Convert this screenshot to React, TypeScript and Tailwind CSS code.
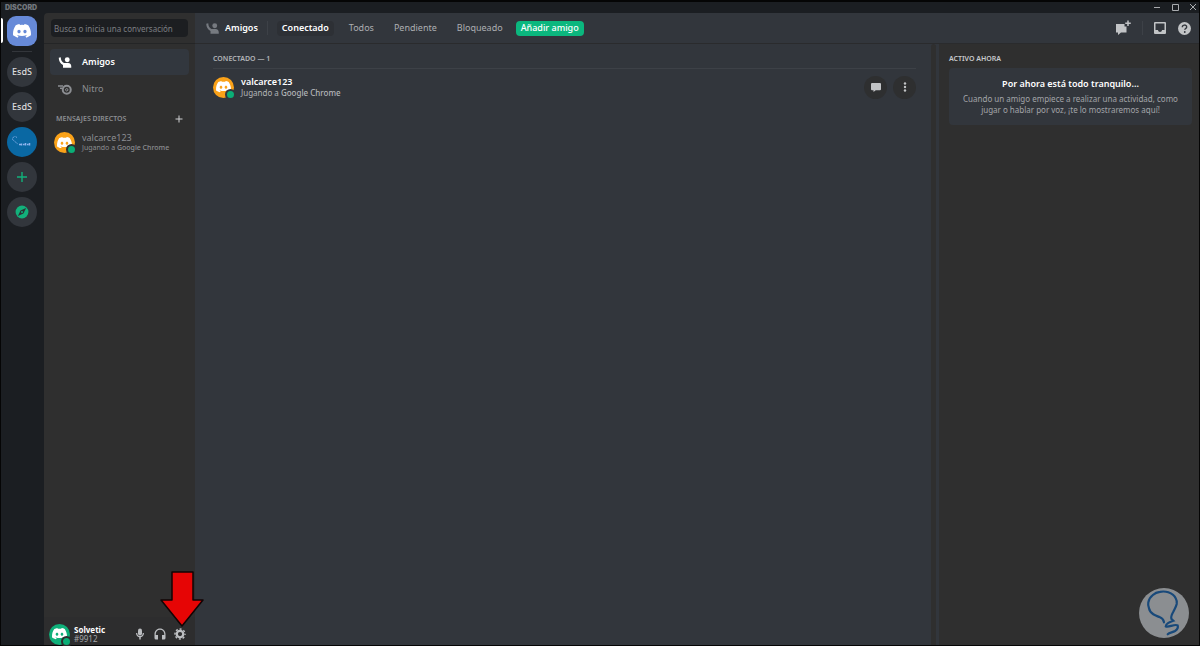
import type { ReactNode } from "react";
import clsx from "clsx";

const CLYDE =
  "M107.7,8.07A105.15,105.15,0,0,0,81.47,0a72.06,72.06,0,0,0-3.36,6.83A97.68,97.68,0,0,0,49,6.83,72.37,72.37,0,0,0,45.64,0,105.89,105.89,0,0,0,19.39,8.09C2.79,32.65-1.71,56.6.54,80.21h0A105.73,105.73,0,0,0,32.71,96.36,77.7,77.7,0,0,0,39.6,85.25a68.42,68.42,0,0,1-10.85-5.18c.91-.66,1.8-1.34,2.66-2a75.57,75.57,0,0,0,64.32,0c.87.71,1.76,1.39,2.66,2a68.68,68.68,0,0,1-10.87,5.19,77,77,0,0,0,6.89,11.1A105.25,105.25,0,0,0,126.6,80.22h0C129.24,52.84,122.09,29.11,107.7,8.07ZM42.45,65.69C36.18,65.69,31,60,31,53s5-12.74,11.43-12.74S54,46,53.89,53,48.84,65.69,42.45,65.69Zm42.24,0C78.41,65.69,73.25,60,73.25,53s5-12.74,11.44-12.74S96.23,46,96.12,53,91.08,65.69,84.69,65.69Z";

const Clyde = ({ className }: { className: string }) => (
  <svg viewBox="0 0 127.14 96.36" fill="currentColor" className={className}>
    <path d={CLYDE} />
  </svg>
);

const FriendsIcon = ({ className }: { className: string }) => (
  <svg viewBox="0 0 26 22" fill="currentColor" className={className}>
    <circle cx="17.500" cy="5.400" r="4.900" />
    <path d="M.5 1.500 4.500.5C4.800 6 6.500 10 11 12H19C23.500 12 25.500 15 25.500 18.500V21.500H9V16C3.500 13 .5 8 .5 1.500Z" />
  </svg>
);

const NitroIcon = () => (
  <svg viewBox="0 0 28 22" fill="none" stroke="currentColor" className="h-[11px] w-[14px]">
    <path d="M0 4h10M4 8.500h4" strokeWidth="2.800" />
    <circle cx="17.500" cy="11.500" r="8" strokeWidth="4" />
    <path d="m17.500 9 2.200 1.300v2.500l-2.200 1.300-2.200-1.300v-2.500z" strokeWidth="2" />
  </svg>
);

const ChatIcon = ({ className }: { className: string }) => (
  <svg viewBox="0 0 20 18" fill="currentColor" className={className}>
    <path d="M2 0h16a2 2 0 0 1 2 2v10.500a2 2 0 0 1-2 2H9.500L5 18v-3.500H2a2 2 0 0 1-2-2V2a2 2 0 0 1 2-2Z" />
  </svg>
);

const Avatar = ({ color, ring }: { color: string; ring: string }) => (
  <span className={clsx("relative flex size-[21px] shrink-0 items-center justify-center rounded-full text-white", color)}>
    <Clyde className="w-[15px]" />
    <span className={clsx("absolute -right-0.5 -bottom-0.5 size-[11px] rounded-full border-2 bg-[#0aae76]", ring)} />
  </span>
);

const RailButton = ({ label, className, children }: { label: string; className?: string; children: ReactNode }) => (
  <button
    aria-label={label}
    className={clsx("flex size-[30px] shrink-0 items-center justify-center rounded-full", className ?? "bg-[#32363c]")}
  >
    {children}
  </button>
);

const TitleBar = () => (
  <div className="flex h-[13px] shrink-0 items-center justify-between border-t-2 border-[#050505] bg-[#1b1e22] pl-1 text-[#73777d]">
    <span className="font-['Inter'] text-[7px] leading-3 font-black">DISCORD</span>
    <div className="flex gap-2 pr-px text-[#a9abae]">
      <button aria-label="Minimizar">
        <svg viewBox="0 0 10 10" className="size-[10px]" stroke="currentColor"><path d="M2 4.500h6" /></svg>
      </button>
      <button aria-label="Maximizar">
        <svg viewBox="0 0 10 10" className="size-[10px]" stroke="currentColor" fill="none"><path d="M2.500 1.500h6v6h-6z" /></svg>
      </button>
      <button aria-label="Cerrar">
        <svg viewBox="0 0 10 10" className="size-[10px]" stroke="currentColor"><path d="m2 1 6 6M8 1 2 7" /></svg>
      </button>
    </div>
  </div>
);

const ServerRail = () => (
  <nav className="flex w-[43px] shrink-0 flex-col gap-[5px] bg-[#1b1e22] pt-[3px] pl-[6px]">
    <div className="relative">
      <span className="absolute top-[2px] -left-[6px] h-[25px] w-[2px] rounded-r bg-white" />
      <button aria-label="Inicio" className="flex size-[30px] items-center justify-center rounded-[9px] bg-[#678ad8] text-white">
        <Clyde className="w-[18px]" />
      </button>
    </div>
    <div className="ml-[5px] h-px w-5 bg-[#33363b]" />
    {[1, 2].map((n) => (
      <RailButton key={n} label={`Servidor ${n}`}>
        <span className="text-[9px] font-medium text-[#dcddde]">EsdS</span>
      </RailButton>
    ))}
    <RailButton label="Solvetic" className="bg-[#0a68a3]">
      <svg viewBox="0 0 20 12" className="h-3 w-5" fill="none" stroke="#8fb4ee">
        <path d="M5 1.500 2.500 0 0 3l4 3.500 2 1.500" strokeDasharray="1.500 .6" strokeWidth=".8" />
        <path d="M7 8.500h2M9.500 7.500v2M11 8.500h1.500M13.500 7v2.500M15 8.500h1.500M17.500 7v2.500" strokeWidth="1.500" />
      </svg>
    </RailButton>
    <RailButton label="Añadir un servidor">
      <svg viewBox="0 0 12 12" className="size-3" stroke="#12b17b" strokeWidth="1.400"><path d="M6 1v10M1 6h10" /></svg>
    </RailButton>
    <RailButton label="Explorar servidores">
      <svg viewBox="0 0 24 24" className="size-[14px]">
        <circle cx="12" cy="12" r="11" fill="#12b17b" />
        <path d="m19 5-4.500 9.500L5 19l4.500-9.500Z" fill="#2b3235" />
        <circle cx="12" cy="12" r="1.700" fill="#12b17b" />
      </svg>
    </RailButton>
  </nav>
);

const UserPanel = () => (
  <div className="relative flex h-7 items-center bg-[#2d2d2e] pt-[6px] pr-[9px] pl-[5px]">
    <Avatar color="bg-[#0fb07a]" ring="border-[#2d2d2e]" />
    <div className="ml-1 flex-1 text-[8px] leading-[9px]">
      <div className="font-bold text-white">Solvetic</div>
      <div className="text-[#a5a7aa]">#9912</div>
    </div>
    <div className="flex gap-2 text-[#bcbec1]">
      <button aria-label="Silenciar">
        <svg viewBox="0 0 24 24" className="size-3" fill="currentColor">
          <rect x="8" y="1" width="8" height="14" rx="4" />
          <path d="M4 10h2.500c0 4 2 6 5.500 6s5.500-2 5.500-6H20c0 4.500-2.500 7.500-6.500 8.300V23h-3v-4.700C6.500 17.500 4 14.500 4 10Z" />
        </svg>
      </button>
      <button aria-label="Ensordecer">
        <svg viewBox="0 0 24 24" className="size-3" fill="currentColor">
          <path d="M12 1C5.500 1 1 6 1 12v8a3 3 0 0 0 3 3h4v-9H3.500v-2C3.500 7.500 7 3.500 12 3.500s8.500 4 8.500 8.500v2H16v9h4a3 3 0 0 0 3-3v-8c0-6-4.500-11-11-11Z" />
        </svg>
      </button>
      <button aria-label="Ajustes de usuario">
        <svg viewBox="0 0 24 24" className="size-3" fill="none" stroke="currentColor">
          <circle cx="12" cy="12" r="6.500" strokeWidth="4.500" />
          <circle cx="12" cy="12" r="10" strokeWidth="3" strokeDasharray="4 3.854" strokeDashoffset="2" />
        </svg>
      </button>
    </div>
    <svg viewBox="0 0 44 58" className="absolute right-[-9px] bottom-[17px] h-[58px] w-[44px]">
      <path d="M12 2H33V30H43L22 56 1 30H12Z" fill="#e60505" stroke="#120404" strokeWidth="1.500" strokeLinejoin="round" />
    </svg>
  </div>
);

const Sidebar = () => (
  <aside className="flex w-[151px] shrink-0 flex-col rounded-tl bg-[#2f2f2f]">
    <div className="flex h-[31px] shrink-0 items-center border-b border-[#242526] px-[7px]">
      <input
        aria-label="Busca o inicia una conversación"
        placeholder="Busca o inicia una conversación"
        className="h-[18px] w-full rounded-sm bg-[#1c1e21] px-[3px] text-[8px] outline-none placeholder:text-[#7d7f83]"
      />
    </div>
    <div className="flex flex-1 flex-col px-[6px] pt-[5px]">
      <button className="flex h-[26px] items-center gap-[10px] rounded-sm bg-[#32373e] pl-2 text-[9px] font-semibold text-white">
        <FriendsIcon className="h-[11px] w-[14px]" />
        Amigos
      </button>
      <button className="mt-px flex h-[26px] items-center gap-[10px] pl-2 text-[9px] text-[#8c8e92]">
        <NitroIcon />
        Nitro
      </button>
      <div className="mt-2 flex h-[18px] items-center justify-between px-[6px] text-[#8c8e92]">
        <h2 className="text-[7px] font-semibold">MENSAJES DIRECTOS</h2>
        <button aria-label="Crear MD">
          <svg viewBox="0 0 8 8" className="size-2" stroke="#d0d1d3"><path d="M4 .5v7M.5 4h7" /></svg>
        </button>
      </div>
      <a href="#dm" className="flex h-[29px] items-center gap-[7px] pl-1">
        <Avatar color="bg-[#faa219]" ring="border-[#2f2f2f]" />
        <div className="text-[#8c8e92]">
          <div className="text-[9px] leading-[10px]">valcarce123</div>
          <div className="text-[7px] leading-[10px]">
            Jugando a <span className="font-medium">Google Chrome</span>
          </div>
        </div>
      </a>
    </div>
    <UserPanel />
  </aside>
);

const tabs = ["Todos", "Pendiente", "Bloqueado"];

const Header = () => (
  <header className="flex h-[31px] shrink-0 items-center border-b border-[#2a2b2d] bg-[#32363c] pr-2 pl-[11px] text-[9px]">
    <FriendsIcon className="h-[11px] w-[13px] text-[#767a80]" />
    <h1 className="ml-[6px] font-semibold text-white">Amigos</h1>
    <div className="mx-[9px] h-[14px] w-px bg-[#3d4147]" />
    <button className="h-[15px] rounded-sm bg-[#2d3035] px-[5px] font-semibold text-white">Conectado</button>
    <div className="ml-[15px] flex gap-5 text-[#adafb2]">
      {tabs.map((tab) => (
        <button key={tab}>{tab}</button>
      ))}
    </div>
    <button className="ml-[13px] h-[15px] rounded-sm bg-[#0bb77e] px-[5px] font-medium text-white">Añadir amigo</button>
    <div className="ml-auto flex items-center text-[#c2c4c6]">
      <button aria-label="Nuevo grupo" className="flex">
        <svg viewBox="0 0 32 32" className="size-4" fill="currentColor">
          <path d="M2 8h17v5h4v12H12l-6 5v-5H2Z" />
          <path d="M24.500 1h3v4h4v3h-4v4h-3V8h-4V5h4Z" />
        </svg>
      </button>
      <div className="mx-[11px] h-[14px] w-px bg-[#3d4147]" />
      <button aria-label="Bandeja de entrada" className="flex">
        <svg viewBox="0 0 24 24" className="size-[12px]" fill="currentColor" fillRule="evenodd">
          <path d="M2 0h20a2 2 0 0 1 2 2v20a2 2 0 0 1-2 2H2a2 2 0 0 1-2-2V2a2 2 0 0 1 2-2Zm1 3v13h5c0 2 2 4 4 4s4-2 4-4h5V3Z" />
        </svg>
      </button>
      <button aria-label="Ayuda" className="ml-3 flex">
        <svg viewBox="0 0 24 24" className="size-[13px]">
          <circle cx="12" cy="12" r="12" fill="currentColor" />
          <path d="M8 9.500c0-5 8-5 8-.5 0 3-3.500 3-3.500 5.500" fill="none" stroke="#32363c" strokeWidth="2.600" />
          <circle cx="12.500" cy="18.500" r="1.700" fill="#32363c" />
        </svg>
      </button>
    </div>
  </header>
);

const FriendList = () => (
  <main className="min-w-0 flex-1 bg-[#32363c] pr-[14px] pl-[18px]">
    <h2 className="border-b border-[#3d4147] pt-[9px] pb-[3px] text-[7px] leading-3 font-semibold text-[#b3b5b8]">
      CONECTADO — 1
    </h2>
    <div className="flex h-9 items-center">
      <Avatar color="bg-[#faa219]" ring="border-[#32363c]" />
      <div className="ml-[7px]">
        <div className="text-[9px] leading-[11px] font-semibold text-white">valcarce123</div>
        <div className="text-[8px] leading-[11px] text-[#b3b5b8]">
          Jugando a <span className="font-medium">Google Chrome</span>
        </div>
      </div>
      <div className="ml-auto flex gap-[6px] text-[#c2c4c6]">
        <button aria-label="Mensaje" className="flex size-[23px] items-center justify-center rounded-full bg-[#2e2f30]">
          <ChatIcon className="h-[9px] w-[10px]" />
        </button>
        <button aria-label="Más" className="flex size-[23px] items-center justify-center rounded-full bg-[#2e2f30]">
          <svg viewBox="0 0 4 12" className="h-3 w-1" fill="currentColor">
            <circle cx="2" cy="2.500" r="1.200" />
            <circle cx="2" cy="6" r="1.200" />
            <circle cx="2" cy="9.500" r="1.200" />
          </svg>
        </button>
      </div>
    </div>
  </main>
);

const ActiveNow = () => (
  <aside className="relative w-[260px] shrink-0 bg-[#2f2f2f] pt-[9px] pr-[7px] pl-[10px]">
    <h2 className="text-[7px] leading-3 font-semibold text-[#c8cacc]">ACTIVO AHORA</h2>
    <div className="mt-[3px] rounded-sm bg-[#32363c] px-2 pt-[10px] pb-[10px] text-center">
      <div className="text-[9px] leading-3 font-semibold text-white">Por ahora está todo tranquilo...</div>
      <p className="mt-[3px] text-[8px] leading-[11px] text-[#a3a5a9]">
        Cuando un amigo empiece a realizar una actividad, como jugar o hablar por voz, ¡te lo mostraremos aquí!
      </p>
    </div>
    <svg viewBox="0 0 50 50" className="absolute right-[10px] bottom-[7px] size-[50px]" fill="none">
      <circle cx="25" cy="25" r="25" fill="#8b8e91" />
      <path
        d="M25 34.300C24.500 31.500 23 30 21 29.300C19 28.300 17 28 14.300 26.300C11.500 24.500 10.300 22 10 20.300C9 18 9 16 9.300 14.500C10 11 11 9 13.500 7.300C16 5 18.500 4 21 3.800C24 3.300 27 3.500 29.300 4.300C33 5.500 35.500 7.500 36.700 10.300C38 12.500 38 14 37.700 16C37 19 35.500 21 34.300 23.700C33 26 31.500 29 32.500 31L34.300 32.700C31.500 33.500 26.500 36 26.700 38.300C29 40 36 35.500 38.700 37.500C39.500 40 37.500 42 36 43C33.500 44.500 30.500 44.500 28.700 46.300"
        stroke="#18497a"
        strokeWidth="2.200"
        strokeLinecap="round"
      />
    </svg>
  </aside>
);

export default function App() {
  return (
    <div className="flex h-screen flex-col border-r border-b border-l border-[#050505] bg-[#1b1e22] font-['Noto_Sans',sans-serif]">
      <TitleBar />
      <div className="flex min-h-0 flex-1">
        <ServerRail />
        <Sidebar />
        <div className="flex min-w-0 flex-1 flex-col">
          <Header />
          <div className="flex min-h-0 flex-1">
            <FriendList />
            <div className="w-[9px] shrink-0 bg-[#32363c] pr-[3px] pl-px">
              <div className="h-full rounded-t bg-[#2f2f2f]" />
            </div>
            <ActiveNow />
          </div>
        </div>
      </div>
    </div>
  );
}
